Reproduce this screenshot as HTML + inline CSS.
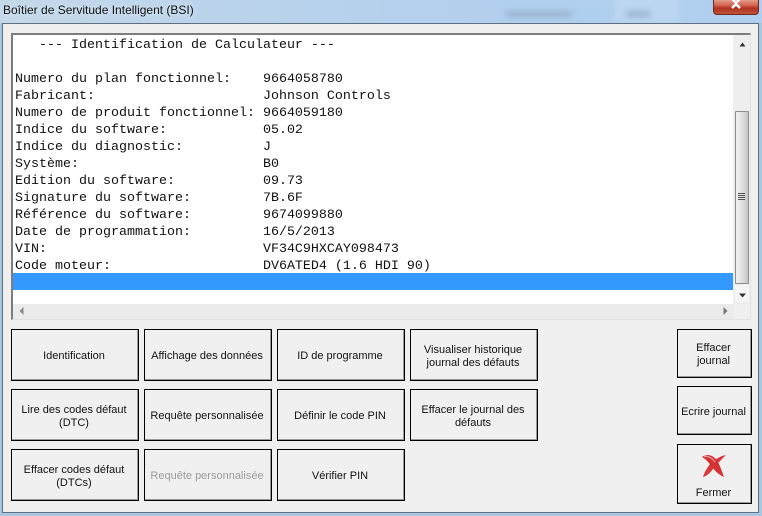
<!DOCTYPE html>
<html>
<head>
<meta charset="utf-8">
<style>
html,body{margin:0;padding:0}
body{width:762px;height:516px;position:relative;overflow:hidden;background:linear-gradient(90deg,#c4d8ea 0,#b3d0ec 55%,#b0cfee 100%);font-family:"Liberation Sans",sans-serif}
.abs{position:absolute}
.title{left:3px;top:3px;font-size:12px;line-height:14px;color:#111;white-space:nowrap;text-shadow:0 0 6px #e6f0f8}
.blur{filter:blur(3px)}
.close{left:713px;top:-2px;width:46px;height:17px;background:linear-gradient(180deg,#e6a596 0,#d0604a 45%,#b0331f 60%,#c0503a 100%);border:1px solid #6e2a24;border-radius:0 0 4px 4px;box-sizing:border-box;text-align:center}
.client{left:2px;top:23px;width:757px;height:490px;box-sizing:border-box;background:#f0f0f0;border:1px solid #5d6f80}
.box{left:11px;top:33px;width:740px;height:287px;box-sizing:border-box;background:#f0f0f0;border-top:2px solid #7d7d7d;border-left:2px solid #7d7d7d;border-right:1px solid #e2e2e2;border-bottom:1px solid #e2e2e2}
.white{left:13px;top:35px;width:721px;height:269px;background:#fff}
.sel{left:13px;top:273px;width:720px;height:17px;background:#3399ff}
pre{position:absolute;left:15px;top:37px;margin:0;font:13.33px/17px "Liberation Mono",monospace;color:#111}
.vbar{left:733px;top:35px;width:17px;height:269px;background:#eeeeee}
.thumb{left:735px;top:111px;width:14px;height:173px;box-sizing:border-box;border:1px solid #8e8e8e;border-radius:1px;background:linear-gradient(90deg,#f2f2f2 0,#e2e2e2 45%,#c4c4c4 100%)}
.grip{left:738px;top:193px;width:7px;height:1px;background:#555;box-shadow:0 2px 0 #555,0 4px 0 #555,0 6px 0 #555}
.hbar{left:13px;top:304px;width:721px;height:15px;background:#ebebeb}
.btn{position:absolute;box-sizing:border-box;background:#f0f0f0;border:1px solid #000;box-shadow:inset -1px -1px 0 #9a9a9a;display:flex;align-items:center;justify-content:center;text-align:center;font-size:11px;line-height:13px;color:#111;padding:3px 4px 0 2px}
.dis{color:#9a9a9a}
.w{width:128px;height:52px}
</style>
</head>
<body>
<div class="abs blur" style="left:498px;top:-4px;width:114px;height:27px;background:#afcfee"></div>
<div class="abs blur" style="left:614px;top:-4px;width:66px;height:27px;background:#bad6f0"></div>
<div class="abs blur" style="left:506px;top:11px;width:66px;height:6px;background:#9ab4ce"></div>
<div class="abs blur" style="left:626px;top:11px;width:24px;height:6px;background:#9cb5ce"></div>
<div class="abs" style="left:0;top:23px;width:762px;height:493px;background:#a9c6e0"></div>
<div class="abs title">Boîtier de Servitude Intelligent (BSI)</div>
<div class="abs close"><svg width="14" height="12" viewBox="0 0 14 12" style="display:block;margin:0 auto"><path d="M3 0L7 3.5L11 0M3 9L7 5L11 9" fill="none" stroke="#fff" stroke-width="2.4"/></svg></div>
<div class="abs client"></div>
<div class="abs box"></div>
<div class="abs white"></div>
<div class="abs sel"></div>
<pre>   --- Identification de Calculateur ---

Numero du plan fonctionnel:    9664058780
Fabricant:                     Johnson Controls
Numero de produit fonctionnel: 9664059180
Indice du software:            05.02
Indice du diagnostic:          J
Système:                       B0
Edition du software:           09.73
Signature du software:         7B.6F
Référence du software:         9674099880
Date de programmation:         16/5/2013
VIN:                           VF34C9HXCAY098473
Code moteur:                   DV6ATED4 (1.6 HDI 90)</pre>
<div class="abs vbar"></div>
<svg class="abs" style="left:739px;top:42px" width="8" height="5"><path d="M0.5 4.5L3.5 0.5L6.5 4.5Z" fill="#333"/></svg>
<div class="abs thumb"></div>
<div class="abs grip"></div>
<div class="abs" style="left:735px;top:285px;width:14px;height:17px;background:#f5f5f5"></div>
<svg class="abs" style="left:739px;top:293px" width="8" height="5"><path d="M0 0.5H7L3.5 4.5Z" fill="#333"/></svg>
<div class="abs hbar"></div>
<svg class="abs" style="left:19px;top:307px" width="5" height="8"><path d="M4.5 0L0.5 4L4.5 8Z" fill="#8a8a8a"/></svg>
<svg class="abs" style="left:723px;top:307px" width="5" height="8"><path d="M0.5 0L4.5 4L0.5 8Z" fill="#777"/></svg>

<div class="btn w" style="left:11px;top:329px">Identification</div>
<div class="btn w" style="left:144px;top:329px">Affichage des données</div>
<div class="btn w" style="left:277px;top:329px">ID de programme</div>
<div class="btn w" style="left:410px;top:329px">Visualiser historique<br>journal des défauts</div>
<div class="btn w" style="left:11px;top:389px">Lire des codes défaut<br>(DTC)</div>
<div class="btn w" style="left:144px;top:389px">Requête personnalisée</div>
<div class="btn w" style="left:277px;top:389px">Définir le code PIN</div>
<div class="btn w" style="left:410px;top:389px">Effacer le journal des<br>défauts</div>
<div class="btn w" style="left:11px;top:449px">Effacer codes défaut<br>(DTCs)</div>
<div class="btn w dis" style="left:144px;top:449px">Requête personnalisée</div>
<div class="btn w" style="left:277px;top:449px">Vérifier PIN</div>
<div class="btn" style="left:677px;top:329px;width:75px;height:49px">Effacer<br>journal</div>
<div class="btn" style="left:677px;top:386px;width:75px;height:49px">Ecrire journal</div>
<div class="btn" style="left:677px;top:444px;width:75px;height:60px;align-items:flex-end;padding-bottom:3px">Fermer</div>
<svg class="abs" style="left:700px;top:453px" width="28" height="26" viewBox="0 0 28 26"><path d="M26 2C20 3 14 7 10 11C7 15 4 20 3 24C7 23 10 20 13 16C17 11 22 6 26 2Z" fill="#d8393a"/><path d="M2 4C7 0 14 2 18 9C20 13 22 18 24 24C19 22 15 18 12 14C9 10 6 6 2 4Z" fill="#d43435"/><path d="M4 3.5C8 2.5 12 5 15 9" stroke="#eb9c9c" stroke-width="1.2" fill="none"/></svg>
</body>
</html>
